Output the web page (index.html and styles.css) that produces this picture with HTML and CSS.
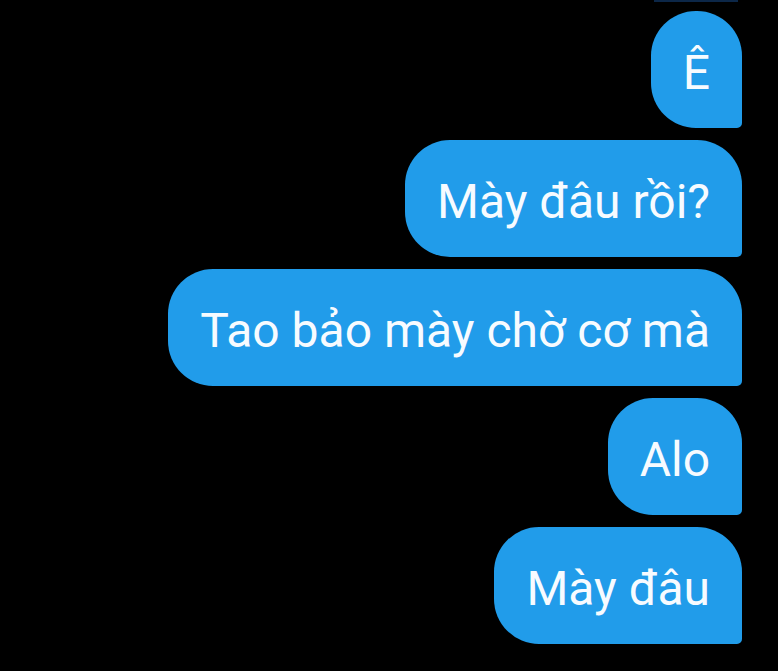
FILE: index.html
```html
<!DOCTYPE html>
<html lang="vi">
<head>
<meta charset="utf-8">
<title>Chat</title>
<link rel="stylesheet" href="styles.css">
</head>
<body>
<div class="thread">
  <div class="prev-edge"></div>
  <div class="bubble">Ê</div>
  <div class="bubble">Mày đâu rồi?</div>
  <div class="bubble">Tao bảo mày chờ cơ mà</div>
  <div class="bubble">Alo</div>
  <div class="bubble">Mày đâu</div>
</div>
</body>
</html>
```
FILE: styles.css
```css
html, body {
  margin: 0;
  padding: 0;
  background: #000;
}
.thread {
  display: flex;
  flex-direction: column;
  align-items: flex-end;
  padding-right: 36px;
  gap: 12px;
}
.prev-edge {
  width: 84px;
  height: 2px;
  margin-right: 4px;
  margin-bottom: -3px;
  background: #0c2748;
}
.bubble {
  box-sizing: border-box;
  height: 117px;
  display: flex;
  align-items: center;
  padding: 6px 32px 0 32px;
  background: #219cea;
  color: #f7fbff;
  font-family: Roboto, "Noto Sans", sans-serif;
  font-size: 48px;
  line-height: 56px;
  border-radius: 45px 45px 5px 45px;
  white-space: nowrap;
}
```
